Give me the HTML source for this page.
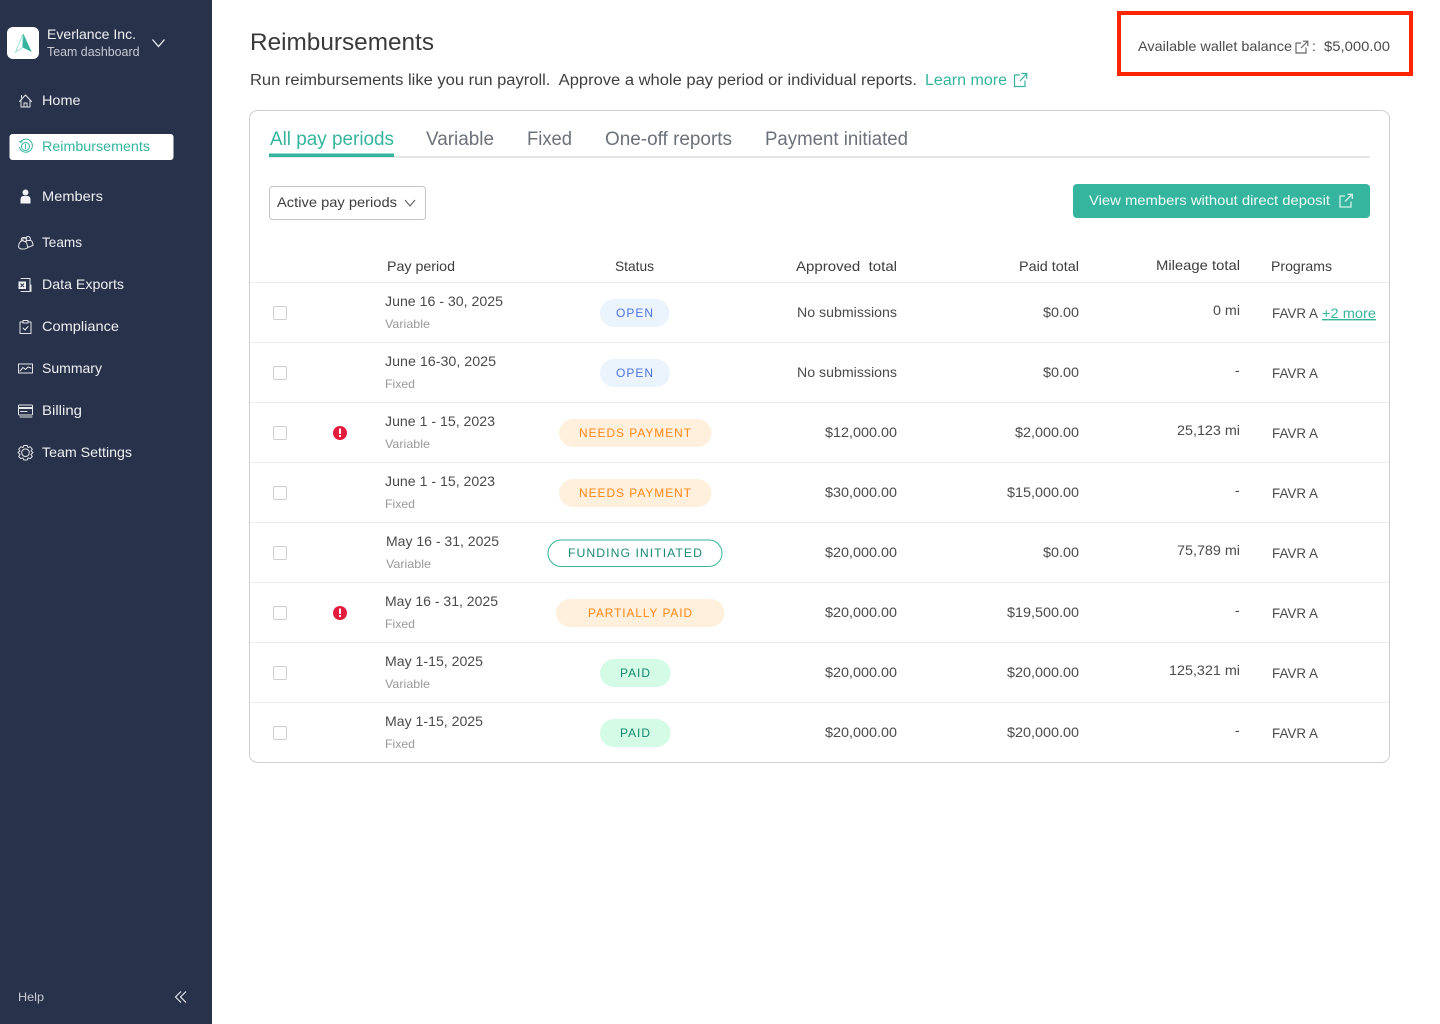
<!DOCTYPE html>
<html lang="en"><head><meta charset="utf-8"><title>Reimbursements</title>
<style>
html,body{margin:0;padding:0;background:#fff;width:1440px;height:1024px;overflow:hidden}
svg{display:block;font-family:"Liberation Sans",sans-serif}
.n{font-size:14px;fill:#eef0f3}
.b{font-size:14px;fill:#4a4a4a}
.h{font-size:14px;fill:#3d3d3d}
.s{font-size:12px;fill:#999}
.t{font-size:19px;fill:#6c7179}
.p{font-size:12px;letter-spacing:1px}
.i{fill:none;stroke:#e4e6ea;stroke-width:1;stroke-linecap:round;stroke-linejoin:round}
.l{stroke:#ececec;stroke-width:1}
.c{fill:#fff;stroke:#cfcfcf;stroke-width:1}
.o{fill:#ff8413}
</style></head><body>
<svg width="1440" height="1024" viewBox="0 0 1440 1024" xmlns="http://www.w3.org/2000/svg">
<rect width="1440" height="1024" fill="#fff"/>
<rect width="212" height="1024" fill="#29324b"/>
<rect x="7" y="27" width="32" height="32" rx="6" fill="#fff"/>
<path d="M23 34L15.500 52L22.500 47.500Z" fill="none" stroke="#7fd3c3" stroke-width=".7"/>
<path d="M23.300 33.500L31.700 52L22.800 47.500Z" fill="#35b59e"/>
<text x="47" y="39" class="n" textLength="89" lengthAdjust="spacingAndGlyphs">Everlance Inc.</text>
<text x="47" y="56" style="font-size:12.5px;fill:#c6cad3" textLength="92.5" lengthAdjust="spacingAndGlyphs">Team dashboard</text>
<path d="M152.500 39.500L158.500 46.500L164.500 39.500" fill="none" stroke="#eef0f3" stroke-width="1.300"/>

<path class="i" d="M19.500 101.500L25.500 95L31.500 101.500M21 100V107H30V100M24 107V103H27V107M21.500 95.500V98"/>
<text x="42" y="105" class="n" textLength="38.500" lengthAdjust="spacingAndGlyphs">Home</text>

<rect x="9.500" y="134" width="164" height="26" rx="3" fill="#fff"/>
<g fill="none" stroke="#35b59e"><path d="M20.500 142A6.500 6.500 0 1 1 19.500 147" stroke-width="1"/><path d="M19 141L20.500 142.500L22.500 141.500" stroke-width=".8"/><circle cx="25.500" cy="146.500" r="4" stroke-width="1"/><path d="M25.500 143.800V149.200" stroke-width=".9"/></g>
<text x="42" y="151" style="font-size:14px;fill:#35b59e" textLength="108" lengthAdjust="spacingAndGlyphs">Reimbursements</text>

<circle cx="25.500" cy="192.500" r="3" fill="#f2f3f5"/><path d="M20.500 203.500V199.500Q20.500 196.500 23 196H28Q30.500 196.500 30.500 199.500V203.500Z" fill="#f2f3f5"/>
<text x="42" y="201" class="n" textLength="61" lengthAdjust="spacingAndGlyphs">Members</text>

<path class="i" d="M18.500 246.500Q19 241.500 22.500 240.500L24 241.500H26L27 240.500Q29 240.500 31 240.500Q33 242 33 245.500L27.500 247.500M18.500 246.500Q19 249 22 249Q27.500 249 27.500 247.500Q27.500 243 25 241.500M21.500 240.500A2 2 0 1 1 25 238.500M26 239A2.200 2.200 0 1 1 29.500 240.500M25 237.500A2 2 0 1 1 24.500 237.500"/>
<text x="42" y="247" class="n" textLength="40" lengthAdjust="spacingAndGlyphs">Teams</text>

<path class="i" d="M21 278.500H30V291.500H21M31 285V291.500"/><rect x="18.500" y="281.500" width="7.500" height="7.500" fill="#f0f1f3"/>
<path d="M20.500 283.500L24 287M24 283.500L20.500 287" stroke="#29324b" stroke-width="1"/>
<text x="42" y="289" class="n" textLength="82" lengthAdjust="spacingAndGlyphs">Data Exports</text>

<path class="i" d="M23 322H20V333.500H31V322H28M23 320.500H28V323H23ZM23 328L25 330L28 326.500"/>
<text x="42" y="331" class="n" textLength="77" lengthAdjust="spacingAndGlyphs">Compliance</text>

<rect x="18.500" y="364" width="14" height="9" class="i"/><path class="i" d="M20 371L23 367.500L25.500 369.500L28 367L31 368"/>
<text x="42" y="373" class="n" textLength="60" lengthAdjust="spacingAndGlyphs">Summary</text>

<rect x="18.500" y="405" width="14" height="10" rx="1" class="i"/><rect x="18.500" y="407" width="14" height="2" fill="#e4e6ea"/><path class="i" d="M20.500 411.500H27M20 417H32"/>
<text x="42" y="415" class="n" textLength="40" lengthAdjust="spacingAndGlyphs">Billing</text>

<path class="i" d="M23.800 445.500H27.200L28 447.500L30.300 446.800L32.300 449.300L31 451L33 452.500L31 454.500L32.300 456.500L30.300 458.500L28 458L27.200 460H23.800L23 458L20.700 458.500L18.700 456.500L20 454.500L18 452.500L20 451L18.700 449.300L20.700 446.800L23 447.500Z"/><circle cx="25.500" cy="452.700" r="3.800" class="i"/>
<text x="42" y="457" class="n" textLength="90" lengthAdjust="spacingAndGlyphs">Team Settings</text>

<text x="18" y="1001" style="font-size:12px;fill:#c9ccd4" textLength="26" lengthAdjust="spacingAndGlyphs">Help</text>
<path d="M181 991.500L175.500 997L181 1002.500M186 991.500L180.500 997L186 1002.500" fill="none" stroke="#eef0f3" stroke-width="1.100"/>

<text x="250" y="50" style="font-size:24px;fill:#3a3a3a" textLength="184" lengthAdjust="spacingAndGlyphs">Reimbursements</text>
<text x="250" y="85" style="font-size:15.500px;fill:#3f3f3f" textLength="667" lengthAdjust="spacingAndGlyphs">Run reimbursements like you run payroll.&#160; Approve a whole pay period or individual reports.</text>
<text x="925" y="85" style="font-size:15.500px;fill:#35b59e" textLength="82" lengthAdjust="spacingAndGlyphs">Learn more</text>
<path d="M1020 75H1014.500V86.500H1025V80.500M1020 81L1026.500 74M1021.500 73.500H1026.800V78.800" fill="none" stroke="#35b59e" stroke-width="1.200"/>

<rect x="1119" y="13" width="292" height="61" fill="none" stroke="#ff2600" stroke-width="4"/>
<text x="1138" y="51" class="b" textLength="154" lengthAdjust="spacingAndGlyphs">Available wallet balance</text>
<path d="M1301 43H1296V53H1306V47.500M1301 48L1307.500 41.500M1303 41.200H1307.800V46" fill="none" stroke="#666" stroke-width="1.200"/>
<text x="1312" y="51" class="b">:</text>
<text x="1324" y="51" class="b" textLength="66" lengthAdjust="spacingAndGlyphs">$5,000.00</text>

<rect x="249.500" y="110.500" width="1140" height="652" rx="8" fill="#fff" stroke="#cfcfcf"/>
<text x="270" y="145" style="font-size:19px;fill:#35b59e" textLength="124" lengthAdjust="spacingAndGlyphs">All pay periods</text>
<text x="426" y="145" class="t" textLength="68" lengthAdjust="spacingAndGlyphs">Variable</text>
<text x="527" y="145" class="t" textLength="45" lengthAdjust="spacingAndGlyphs">Fixed</text>
<text x="605" y="145" class="t" textLength="127" lengthAdjust="spacingAndGlyphs">One-off reports</text>
<text x="765" y="145" class="t" textLength="143" lengthAdjust="spacingAndGlyphs">Payment initiated</text>
<rect x="269" y="156" width="1101" height="2" fill="#e6e6e6"/>
<rect x="269" y="153.500" width="125" height="3.500" fill="#35b59e"/>

<rect x="269.500" y="186.500" width="156" height="33" rx="3" fill="#fff" stroke="#c4c4c4"/>
<text x="277" y="207" class="h" textLength="120" lengthAdjust="spacingAndGlyphs">Active pay periods</text>
<path d="M405 200L410 206L415 200" fill="none" stroke="#555" stroke-width="1"/>

<rect x="1073" y="184" width="297" height="34" rx="4" fill="#35b59e"/>
<text x="1089" y="205" style="font-size:14px;fill:#eefaf7" textLength="241" lengthAdjust="spacingAndGlyphs">View members without direct deposit</text>
<path d="M1345 196H1340V207H1351V201.500M1345 201.500L1352 194.500M1347.500 194.300H1352.300V199" fill="none" stroke="#d5f0ea" stroke-width="1.300"/>

<text x="387" y="271" class="h" textLength="68" lengthAdjust="spacingAndGlyphs">Pay period</text>
<text x="615" y="271" class="h" textLength="39" lengthAdjust="spacingAndGlyphs">Status</text>
<text x="796" y="271" class="h" textLength="101" lengthAdjust="spacingAndGlyphs">Approved&#160; total</text>
<text x="1019" y="271" class="h" textLength="60" lengthAdjust="spacingAndGlyphs">Paid total</text>
<text x="1156" y="270" class="h" textLength="84" lengthAdjust="spacingAndGlyphs">Mileage total</text>
<text x="1271" y="271" class="h" textLength="61" lengthAdjust="spacingAndGlyphs">Programs</text>

<path class="l" d="M250 282.500H1389M250 342.500H1389M250 402.500H1389M250 462.500H1389M250 522.500H1389M250 582.500H1389M250 642.500H1389M250 702.500H1389"/>

<rect x="273.500" y="306.500" width="13" height="13" rx="1.500" class="c"/>
<rect x="273.500" y="366.500" width="13" height="13" rx="1.500" class="c"/>
<rect x="273.500" y="426.500" width="13" height="13" rx="1.500" class="c"/>
<rect x="273.500" y="486.500" width="13" height="13" rx="1.500" class="c"/>
<rect x="273.500" y="546.500" width="13" height="13" rx="1.500" class="c"/>
<rect x="273.500" y="606.500" width="13" height="13" rx="1.500" class="c"/>
<rect x="273.500" y="666.500" width="13" height="13" rx="1.500" class="c"/>
<rect x="273.500" y="726.500" width="13" height="13" rx="1.500" class="c"/>

<circle cx="340" cy="433" r="7" fill="#e31c3d"/><rect x="339" y="428.500" width="2" height="5.500" fill="#fff"/><rect x="339" y="435" width="2" height="2" fill="#fff"/>
<circle cx="340" cy="613" r="7" fill="#e31c3d"/><rect x="339" y="608.500" width="2" height="5.500" fill="#fff"/><rect x="339" y="615" width="2" height="2" fill="#fff"/>

<text x="385" y="306" class="b" textLength="118" lengthAdjust="spacingAndGlyphs">June 16 - 30, 2025</text><text x="385" y="328" class="s" textLength="45" lengthAdjust="spacingAndGlyphs">Variable</text>
<text x="385" y="366" class="b" textLength="111" lengthAdjust="spacingAndGlyphs">June 16-30, 2025</text><text x="385" y="388" class="s" textLength="30" lengthAdjust="spacingAndGlyphs">Fixed</text>
<text x="385" y="426" class="b" textLength="110" lengthAdjust="spacingAndGlyphs">June 1 - 15, 2023</text><text x="385" y="448" class="s" textLength="45" lengthAdjust="spacingAndGlyphs">Variable</text>
<text x="385" y="486" class="b" textLength="110" lengthAdjust="spacingAndGlyphs">June 1 - 15, 2023</text><text x="385" y="508" class="s" textLength="30" lengthAdjust="spacingAndGlyphs">Fixed</text>
<text x="386" y="546" class="b" textLength="113" lengthAdjust="spacingAndGlyphs">May 16 - 31, 2025</text><text x="386" y="568" class="s" textLength="45" lengthAdjust="spacingAndGlyphs">Variable</text>
<text x="385" y="606" class="b" textLength="113" lengthAdjust="spacingAndGlyphs">May 16 - 31, 2025</text><text x="385" y="628" class="s" textLength="30" lengthAdjust="spacingAndGlyphs">Fixed</text>
<text x="385" y="666" class="b" textLength="98" lengthAdjust="spacingAndGlyphs">May 1-15, 2025</text><text x="385" y="688" class="s" textLength="45" lengthAdjust="spacingAndGlyphs">Variable</text>
<text x="385" y="726" class="b" textLength="98" lengthAdjust="spacingAndGlyphs">May 1-15, 2025</text><text x="385" y="748" class="s" textLength="30" lengthAdjust="spacingAndGlyphs">Fixed</text>

<rect x="600" y="299" width="69.500" height="28" rx="14" fill="#ebf3fd"/><text x="616" y="317" class="p" fill="#4c74e0" textLength="38" lengthAdjust="spacingAndGlyphs">OPEN</text>
<rect x="600" y="359" width="70" height="28" rx="14" fill="#ebf3fd"/><text x="616" y="377" class="p" fill="#4c74e0" textLength="38" lengthAdjust="spacingAndGlyphs">OPEN</text>
<rect x="559" y="419" width="152.500" height="28" rx="14" fill="#fef0dc"/><text x="579" y="437" class="p o" textLength="113" lengthAdjust="spacingAndGlyphs">NEEDS PAYMENT</text>
<rect x="559" y="479" width="152.500" height="28" rx="14" fill="#fef0dc"/><text x="579" y="497" class="p o" textLength="113" lengthAdjust="spacingAndGlyphs">NEEDS PAYMENT</text>
<rect x="548" y="540" width="174" height="26.500" rx="13.200" fill="#fff" stroke="#35b59e"/><text x="568" y="557" class="p" fill="#1a8a76" textLength="135" lengthAdjust="spacingAndGlyphs">FUNDING INITIATED</text>
<rect x="556" y="599" width="168.500" height="28" rx="14" fill="#fef0dc"/><text x="588" y="617" class="p o" textLength="105" lengthAdjust="spacingAndGlyphs">PARTIALLY PAID</text>
<rect x="600" y="659" width="70.500" height="28" rx="14" fill="#d4fbe6"/><text x="620" y="677" class="p" fill="#12876f" textLength="31" lengthAdjust="spacingAndGlyphs">PAID</text>
<rect x="600" y="719" width="70.500" height="28" rx="14" fill="#d4fbe6"/><text x="620" y="737" class="p" fill="#12876f" textLength="31" lengthAdjust="spacingAndGlyphs">PAID</text>

<text x="797" y="317" class="b" textLength="100" lengthAdjust="spacingAndGlyphs">No submissions</text>
<text x="797" y="377" class="b" textLength="100" lengthAdjust="spacingAndGlyphs">No submissions</text>
<text x="825" y="437" class="b" textLength="72" lengthAdjust="spacingAndGlyphs">$12,000.00</text>
<text x="825" y="497" class="b" textLength="72" lengthAdjust="spacingAndGlyphs">$30,000.00</text>
<text x="825" y="557" class="b" textLength="72" lengthAdjust="spacingAndGlyphs">$20,000.00</text>
<text x="825" y="617" class="b" textLength="72" lengthAdjust="spacingAndGlyphs">$20,000.00</text>
<text x="825" y="677" class="b" textLength="72" lengthAdjust="spacingAndGlyphs">$20,000.00</text>
<text x="825" y="737" class="b" textLength="72" lengthAdjust="spacingAndGlyphs">$20,000.00</text>

<text x="1043" y="317" class="b" textLength="36" lengthAdjust="spacingAndGlyphs">$0.00</text>
<text x="1043" y="377" class="b" textLength="36" lengthAdjust="spacingAndGlyphs">$0.00</text>
<text x="1015" y="437" class="b" textLength="64" lengthAdjust="spacingAndGlyphs">$2,000.00</text>
<text x="1007" y="497" class="b" textLength="72" lengthAdjust="spacingAndGlyphs">$15,000.00</text>
<text x="1043" y="557" class="b" textLength="36" lengthAdjust="spacingAndGlyphs">$0.00</text>
<text x="1007" y="617" class="b" textLength="72" lengthAdjust="spacingAndGlyphs">$19,500.00</text>
<text x="1007" y="677" class="b" textLength="72" lengthAdjust="spacingAndGlyphs">$20,000.00</text>
<text x="1007" y="737" class="b" textLength="72" lengthAdjust="spacingAndGlyphs">$20,000.00</text>

<text x="1213" y="315" class="b" textLength="27" lengthAdjust="spacingAndGlyphs">0 mi</text>
<text x="1235" y="375" class="b">-</text>
<text x="1177" y="435" class="b" textLength="63" lengthAdjust="spacingAndGlyphs">25,123 mi</text>
<text x="1235" y="495" class="b">-</text>
<text x="1177" y="555" class="b" textLength="63" lengthAdjust="spacingAndGlyphs">75,789 mi</text>
<text x="1235" y="615" class="b">-</text>
<text x="1169" y="675" class="b" textLength="71" lengthAdjust="spacingAndGlyphs">125,321 mi</text>
<text x="1235" y="735" class="b">-</text>

<text x="1272" y="318" class="b" textLength="46" lengthAdjust="spacingAndGlyphs">FAVR A</text>
<text x="1322" y="318" style="font-size:14px;fill:#35b59e;text-decoration:underline" textLength="54" lengthAdjust="spacingAndGlyphs">+2 more</text>
<text x="1272" y="378" class="b" textLength="46" lengthAdjust="spacingAndGlyphs">FAVR A</text>
<text x="1272" y="438" class="b" textLength="46" lengthAdjust="spacingAndGlyphs">FAVR A</text>
<text x="1272" y="498" class="b" textLength="46" lengthAdjust="spacingAndGlyphs">FAVR A</text>
<text x="1272" y="558" class="b" textLength="46" lengthAdjust="spacingAndGlyphs">FAVR A</text>
<text x="1272" y="618" class="b" textLength="46" lengthAdjust="spacingAndGlyphs">FAVR A</text>
<text x="1272" y="678" class="b" textLength="46" lengthAdjust="spacingAndGlyphs">FAVR A</text>
<text x="1272" y="738" class="b" textLength="46" lengthAdjust="spacingAndGlyphs">FAVR A</text>
</svg>
</body></html>
